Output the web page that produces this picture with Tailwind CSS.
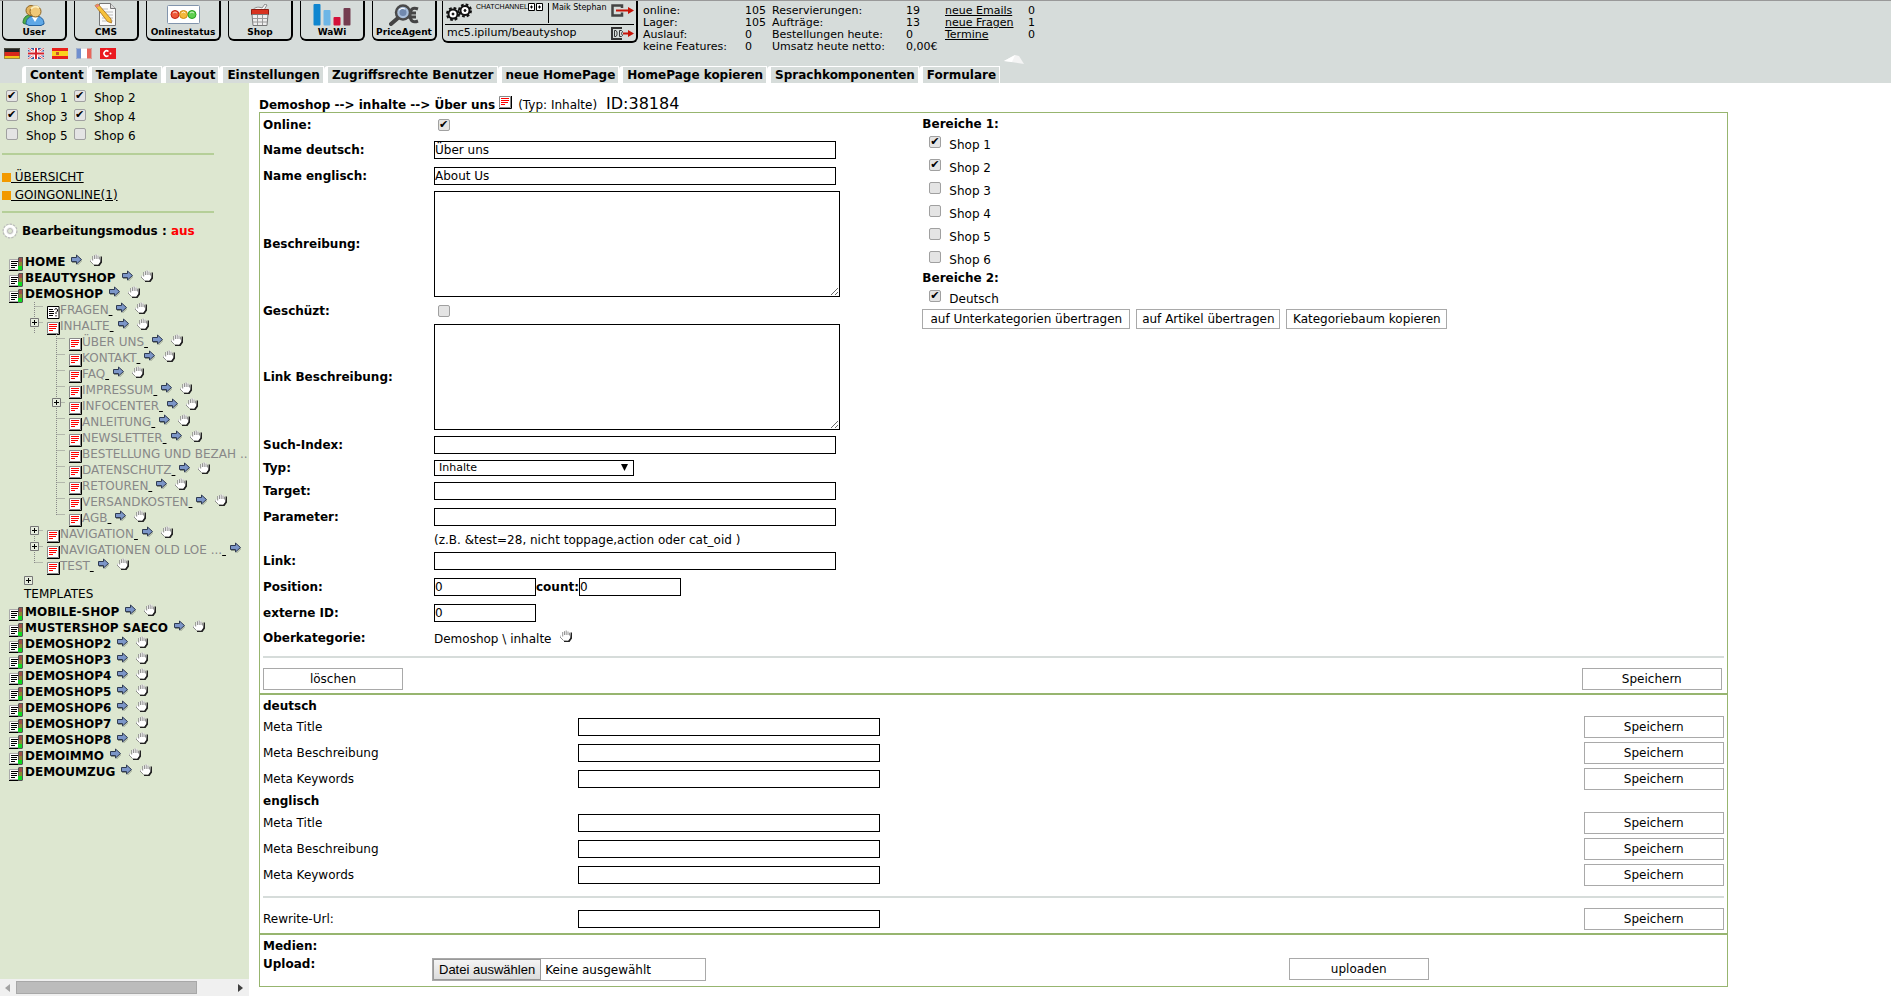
<!DOCTYPE html>
<html lang="de">
<head>
    <meta charset="UTF-8">
    <meta name="viewport" content="width=device-width, initial-scale=1.0">
    <title>CMS - Über uns</title>
    <script src="https://cdn.jsdelivr.net/npm/@tailwindcss/browser@4"></script>
</head>
<body class="flex min-h-screen flex-col bg-white font-['DejaVu_Sans',Verdana,sans-serif] text-xs text-black">
    <!-- icons -->
    <svg class="hidden">
        <symbol id="i-arrow" viewBox="0 0 11 11">
            <path d="M1 8h5v3l5-5v1l-4 4H6V9H1z" fill="#8d9686"/>
            <path d="M.5 3.500h5V1l5 4.500-5 4.500V7.500h-5z" fill="#7c96c8" stroke="#2f3a52"/>
        </symbol>
        <symbol id="i-hand" viewBox="0 0 12 12">
            <path d="M3 10h1v2h5.500l2.500-3.500V2.500l-1.500 0-.5 5-2 3z" fill="#222"/>
            <path d="M3.500 10.500 0 7V5.500l1.500 0 1.200 1V2h1.600V1h1.500V.3h1.500V1.300h1.500v1.400h1.500v5l-2 2.800z" fill="#fff"/>
            <path d="M2.700 6.500V2M4.500 5V1.200M6.200 5V.5M8 5V1.500M9.500 5.500V2.700M3.500 10.500 0 7V5.500" fill="none" stroke="#666" stroke-width=".7"/>
        </symbol>
        <symbol id="i-page" viewBox="0 0 13 13">
            <path d="M.5.5h11v11H.5z" fill="#fff" stroke="#888"/>
            <path d="M12.500 0v12.500H0" fill="none" stroke="#000"/>
            <path d="M2 2.500h8M2 4.500h8M2 6.500h7M2 8.500h4" stroke="#f00"/>
        </symbol>
        <symbol id="i-question" viewBox="0 0 13 13">
            <path d="M.5.5h11.500v12H.5z" fill="#fff" stroke="#000"/>
            <path d="M2 3.500h4M2 5.500h5M2 7.500h5M2 9.500h4M7.500 3.500 9 2.500l1.500 1v1.500L9 6.500V8M9 9v1.500" fill="none" stroke="#000"/>
        </symbol>
        <symbol id="i-shop" viewBox="0 0 14 14">
            <path d="M.5 2.500h9v10h-9z" fill="#fff" stroke="#aaa"/>
            <path d="M0 13.500h10M2 4.500h7M2 6.500h6M2 8.500h6M2 10.500h4" stroke="#000"/>
            <path d="M9 1l1-1h4v13l-1 1H9z" fill="#555"/>
            <path d="M10 1h3v4h-3z" fill="#a05048"/><path d="M10 5h3v4h-3z" fill="#8a8a30"/><path d="M9 9h4v4H9z" fill="#10d820"/>
        </symbol>
        <symbol id="i-plus" viewBox="0 0 9 9">
            <path d="M.5.5h8v8h-8z" fill="#e6edde" stroke="#777"/><path d="M2 4.500h5M4.500 2v5" stroke="#000"/>
        </symbol>
    </svg>

    <header class="flex h-[83px] shrink-0 flex-col justify-between border-t border-[#999] bg-[#d6dcda]">
        <div class="flex items-start">
            <div>
                <nav class="flex gap-[7px] pl-[2px] text-[9px] font-bold leading-[10px]">
                    <a href="#" class="flex h-[40px] w-[65px] flex-col items-center gap-px rounded-b-md border-r-2 border-b-2 border-l border-black pt-[3px]">
                        <svg class="h-[22px] w-[24px]" viewBox="0 0 24 22">
                            <path d="M1 19c0-5 3-8 7-8l3 3v6H3z" fill="#4fae4b" stroke="#2c7d36"/>
                            <circle cx="9" cy="6.500" r="5" fill="#e3b35c" stroke="#8e6523"/>
                            <path d="M4 20c0-5 3-8 9-8s9 3 9 8l-3 1.500H7z" fill="#5fa8e6" stroke="#1f5f9e"/>
                            <path d="M10 13l3 5 3-5z" fill="#fff"/>
                            <circle cx="13.500" cy="7.500" r="5.500" fill="#f0c878" stroke="#8e6523"/>
                            <path d="M9 5c2-3 6-3 8-1" stroke="#fdeebb" stroke-width="2" fill="none"/>
                        </svg>
                        User
                    </a>
                    <a href="#" class="flex h-[40px] w-[65px] flex-col items-center gap-px rounded-b-md border-r-2 border-b-2 border-l border-black pt-[2px]">
                        <svg class="h-[23px] w-[24px]" viewBox="0 0 24 23">
                            <path d="M5.500.5h11l5 5v17h-16z" fill="#fafafa" stroke="#777"/>
                            <path d="M16.500.5v5h5" fill="#ddd" stroke="#777"/>
                            <path d="M8 6h6M8 9h11M8 12h11M8 15h11M8 18h11" stroke="#bbb"/>
                            <path d="M1 2.500 4 1l13 15 .5 4-4-1.500z" fill="#f7c23c" stroke="#a86f16" stroke-width=".8"/>
                            <path d="M1 2.500 4 1l1.500 1.800-2.800 2z" fill="#e8847a"/>
                        </svg>
                        CMS
                    </a>
                    <a href="#" class="flex h-[40px] w-[75px] flex-col items-center gap-[3px] rounded-b-md border-r-2 border-b-2 border-l border-black pt-[4px]">
                        <svg class="h-[19px] w-[33px]" viewBox="0 0 33 19">
                            <rect x=".5" y=".5" width="32" height="18" rx="1" fill="#fff" stroke="#8295ad"/>
                            <circle cx="8" cy="9.500" r="4" fill="#ee5a3a" stroke="#c02010"/><circle cx="16.500" cy="9.500" r="4" fill="#f4b93c" stroke="#d08a10"/><circle cx="25" cy="9.500" r="4" fill="#5fd050" stroke="#27a020"/>
                            <path d="M6 8q2-2 4 0M14.500 8q2-2 4 0M23 8q2-2 4 0" stroke="#fff" fill="none" stroke-opacity=".7"/>
                        </svg>
                        Onlinestatus
                    </a>
                    <a href="#" class="flex h-[40px] w-[65px] flex-col items-center gap-px rounded-b-md border-r-2 border-b-2 border-l border-black pt-[3px]">
                        <svg class="h-[22px] w-[18px]" viewBox="0 0 18 22">
                            <path d="M1 7c3-5 8-4 10-3l3-4 2 1-3 5 3 2v3H1z" fill="#f5f5f5" stroke="#777" stroke-width=".8"/>
                            <path d="M.5 5.500h17v5H.5z" fill="#d8321f" stroke="#8d1d12"/>
                            <path d="M1 10.500h16l-1 11H2z" fill="#eee" stroke="#777"/>
                            <path d="M6.500 11v10M11.500 11v10M2 14.500h14M2 18h14" stroke="#999"/>
                        </svg>
                        Shop
                    </a>
                    <a href="#" class="flex h-[40px] w-[65px] flex-col items-center gap-px rounded-b-md border-r-2 border-b-2 border-l border-black pt-[2px]">
                        <svg class="h-[23px] w-[38px]" viewBox="0 0 38 23">
                            <rect x=".5" y="1" width="7" height="21.500" rx="1" fill="#0f86d0"/><rect x="10.500" y="7" width="7" height="15.500" rx="1" fill="#6db6e6"/><rect x="20.500" y="14" width="7" height="8.500" rx="1" fill="#d4103a"/><rect x="30.500" y="5" width="7" height="17.500" rx="1" fill="#743c50"/>
                        </svg>
                        WaWi
                    </a>
                    <a href="#" class="flex h-[40px] w-[65px] flex-col items-center gap-px rounded-b-md border-r-2 border-b-2 border-l border-black pt-[3px]">
                        <svg class="h-[22px] w-[30px]" viewBox="0 0 30 22">
                            <path d="M29 5c-5-2-8 0-8 6s3 8 8 6M18 9h9M18 13h9" stroke="#444" stroke-width="3" fill="none"/>
                            <path d="M2 20l7-6" stroke="#444" stroke-width="4" stroke-linecap="round"/>
                            <circle cx="14" cy="8.500" r="7" fill="#a9bfdb" stroke="#4a4a4a" stroke-width="2.500"/>
                            <circle cx="14" cy="8.500" r="3.500" fill="#7189ae"/><path d="M10 6q3-3 6-1" stroke="#fff" fill="none"/>
                        </svg>
                        PriceAgent
                    </a>
                </nav>
                <div class="flex gap-2 pt-[7px] pl-1">
                    <a href="#" aria-label="Deutsch"><svg class="h-[11px] w-4" viewBox="0 0 16 11"><path fill="#222" d="M0 0h16v4H0z"/><path fill="#d9281c" d="M0 4h16v4H0z"/><path fill="#f1c21b" d="M0 8h16v3H0z"/><path d="M.5.5h15v10H.5z" fill="none" stroke="#665" stroke-opacity=".6"/></svg></a>
                    <a href="#" aria-label="English"><svg class="h-[11px] w-4" viewBox="0 0 16 11"><path fill="#3d5a9e" d="M0 0h16v11H0z"/><path d="M0 0l16 11M16 0L0 11" stroke="#fff" stroke-width="2.500"/><path d="M0 0l16 11M16 0L0 11" stroke="#d33" stroke-width=".8"/><path d="M8 0v11M0 5.500h16" stroke="#fff" stroke-width="4"/><path d="M8 0v11M0 5.500h16" stroke="#d3222c" stroke-width="2"/></svg></a>
                    <a href="#" aria-label="Español"><svg class="h-[11px] w-4" viewBox="0 0 16 11"><path fill="#e8201c" d="M0 0h16v11H0z"/><path fill="#fbd21c" d="M0 3h16v5H0z"/><path fill="#c5502c" d="M4 4h3v3H4z"/></svg></a>
                    <a href="#" aria-label="Français"><svg class="h-[11px] w-4" viewBox="0 0 16 11"><path fill="#fff" d="M0 0h16v11H0z"/><path fill="#6f8fcf" d="M0 0h5v11H0z"/><path fill="#e8655a" d="M11 0h5v11h-5z"/><path d="M.5.5h15v10H.5z" fill="none" stroke="#ccc" stroke-opacity=".6"/></svg></a>
                    <a href="#" aria-label="Türkçe"><svg class="h-[11px] w-4" viewBox="0 0 16 11"><path fill="#ea1a20" d="M0 0h16v11H0z"/><path d="M8.500 3.500a2.700 2.700 0 1 0 0 4" stroke="#fff" stroke-width="1.500" fill="none"/><circle cx="10.500" cy="5.500" r="1" fill="#fff"/></svg></a>
                </div>
            </div>

            <div class="ml-[5px] w-[196px] rounded-b-md border-r-2 border-b-2 border-l border-black px-[2px]">
                <div class="flex h-[24px] items-start gap-[3px] border-b border-black pt-[2px]">
                    <svg class="h-[18px] w-[28px] shrink-0" viewBox="0 0 28 18">
                        <g fill="none" stroke="#111">
                            <circle cx="8" cy="11" r="6" stroke-width="2" stroke-dasharray="2.700 2"/><circle cx="8" cy="11" r="4.500" stroke-width="2" fill="#fff"/><circle cx="8" cy="11" r="1" fill="#111"/>
                            <circle cx="20" cy="7.500" r="6" stroke-width="2" stroke-dasharray="2.700 2"/><circle cx="20" cy="7.500" r="4.500" stroke-width="2" fill="#fff"/><circle cx="20" cy="7.500" r="1" fill="#111"/>
                        </g>
                    </svg>
                    <div class="flex h-[20px] w-[73px] shrink-0 items-start border-r border-black font-['Liberation_Sans',sans-serif] text-[7px] leading-[8px]">
                        <span>CHATCHANNEL</span>
                        <svg class="h-2 w-[15px] shrink-0" viewBox="0 0 15 8"><path d="M.5.5h6v7h-6zM8.500.5h6v7h-6z" fill="#fff" stroke="#000"/><path d="M2 4h3M3.500 2.500v3M10 4h3M11.500 2.500v3" stroke="#000"/></svg>
                    </div>
                    <span class="w-[58px] text-[8px] leading-[10px] whitespace-nowrap">Maik Stephan</span>
                    <a href="#" aria-label="Logout"><svg class="h-[15px] w-[23px]" viewBox="0 0 23 15"><path d="M11 5V2.500H1.500v10H11v-3" fill="none" stroke="#444" stroke-width="2.500"/><path d="M5 6.500h12V4l6 3.500-6 3.500V8.500H5z" fill="#c81408"/></svg></a>
                </div>
                <div class="flex h-[16px] items-center justify-between pl-[2px] text-[11px]">
                    <span>mc5.ipilum/beautyshop</span>
                    <a href="#" aria-label="Datenbank"><svg class="h-[13px] w-[23px]" viewBox="0 0 23 13"><path d="M11 1H1v11h10" fill="none" stroke="#333" stroke-width="2"/><path d="M3.500 3.500v6h1.500l1-1.500V5L5 3.500zM8.500 3.500v6h2l1-1-1-2 1-2-1-1z" fill="none" stroke="#333"/><path d="M12 5.500h5V3l6 3.500-6 3.500V7.500h-5z" fill="#c81408"/></svg></a>
                </div>
            </div>

            <table class="mt-1 ml-[5px] text-[11px] leading-[12px] whitespace-nowrap">
                <tbody>
                    <tr><td class="w-[102px] p-0">online:</td><td class="w-[27px] p-0">105</td><td class="w-[134px] p-0">Reservierungen:</td><td class="w-[39px] p-0">19</td><td class="w-[83px] p-0"><a href="#" class="underline">neue Emails</a></td><td class="p-0">0</td></tr>
                    <tr><td class="p-0">Lager:</td><td class="p-0">105</td><td class="p-0">Aufträge:</td><td class="p-0">13</td><td class="p-0"><a href="#" class="underline">neue Fragen</a></td><td class="p-0">1</td></tr>
                    <tr><td class="p-0">Auslauf:</td><td class="p-0">0</td><td class="p-0">Bestellungen heute:</td><td class="p-0">0</td><td class="p-0"><a href="#" class="underline">Termine</a></td><td class="p-0">0</td></tr>
                    <tr><td class="p-0">keine Features:</td><td class="p-0">0</td><td class="p-0">Umsatz heute netto:</td><td class="p-0">0,00€</td><td class="p-0"></td><td class="p-0"></td></tr>
                </tbody>
            </table>
            <svg class="mt-[54px] -ml-[32px] h-[10px] w-[22px]" viewBox="0 0 22 10"><path d="M1 6 12 0l4 1 5 8z" fill="#f4f4f4"/><path d="M1 6 12 0 9 7z" fill="#fff"/></svg>
        </div>
        <nav class="flex pl-[22px] text-xs font-bold leading-4 whitespace-nowrap">
            <a href="#" class="rounded-tl-sm border-t border-r border-l-4 border-white pr-[3px] pl-1">Content</a>
            <a href="#" class="rounded-tl-sm border-t border-r border-l-4 border-white pr-[3px] pl-1">Template</a>
            <a href="#" class="rounded-tl-sm border-t border-r border-l-4 border-white pr-[3px] pl-1">Layout</a>
            <a href="#" class="rounded-tl-sm border-t border-r border-l-4 border-white pr-[3px] pl-1">Einstellungen</a>
            <a href="#" class="rounded-tl-sm border-t border-r border-l-4 border-white pr-[3px] pl-1">Zugriffsrechte Benutzer</a>
            <a href="#" class="rounded-tl-sm border-t border-r border-l-4 border-white pr-[3px] pl-1">neue HomePage</a>
            <a href="#" class="rounded-tl-sm border-t border-r border-l-4 border-white pr-[3px] pl-1">HomePage kopieren</a>
            <a href="#" class="rounded-tl-sm border-t border-r border-l-4 border-white pr-[3px] pl-1">Sprachkomponenten</a>
            <a href="#" class="rounded-tl-sm border-t border-r border-l-4 border-white pr-[3px] pl-1">Formulare</a>
        </nav>
    </header>

    <div class="flex grow">
        <aside class="flex w-[249px] shrink-0 flex-col overflow-hidden bg-[#dde7d0]">
            <div id="shopFilter" class="grid grid-cols-[68px_auto] justify-start pt-1 pl-[6px]"></div>
            <hr class="mt-[9px] mr-[35px] ml-[2px] border-t-2 border-[#b5cf98]">
            <ul class="mt-[13px] pl-[2px] leading-[18px]">
                <li class="flex items-center"><span class="size-[9px] bg-[#f29a00]"></span><a href="#" class="whitespace-pre underline"> ÜBERSICHT</a></li>
                <li class="flex items-center"><span class="size-[9px] bg-[#f29a00]"></span><a href="#" class="whitespace-pre underline"> GOINGONLINE(1)</a></li>
            </ul>
            <hr class="mt-[7px] mr-[35px] ml-[2px] border-t-2 border-[#b5cf98]">
            <div class="mt-[10px] flex h-4 items-center gap-1 pl-[2px] font-bold">
                <svg class="size-4" viewBox="0 0 16 16"><circle cx="8" cy="8" r="6.800" fill="none" stroke="#bbb" stroke-width="1.500" stroke-dasharray="2.200 1.300"/><circle cx="8" cy="8" r="5" fill="#eee" stroke="#fff" stroke-width="2.500"/><circle cx="8" cy="8" r="2.500" fill="#dde7d0" stroke="#bbb"/></svg>
                <span>Bearbeitungsmodus : <span class="text-[#f00]">aus</span></span>
            </div>
            <ul id="tree" class="mt-[15px] leading-4 whitespace-nowrap"></ul>
            <div class="mt-auto flex h-[17px] items-center bg-[#f0f0f0]">
                <svg class="mx-1 h-2 w-2" viewBox="0 0 8 8"><path d="M6 0v8L1 4z" fill="#a3a3a3"/></svg>
                <div class="h-[13px] w-[181px] border border-[#a8a8a8] bg-[#bcbcbc]"></div>
                <svg class="mr-[5px] ml-auto h-2 w-2" viewBox="0 0 8 8"><path d="M2 0v8l5-4z" fill="#404040"/></svg>
            </div>
        </aside>

        <main class="grow pl-[10px]">
            <div class="w-9/10">
                <h1 class="flex h-[29px] items-end whitespace-pre font-bold leading-[14px]">Demoshop --&gt; inhalte --&gt; Über uns <svg class="mr-[2px] mb-[3px] size-[13px]"><use href="#i-page"/></svg><span class="font-normal"> (Typ: Inhalte) </span><span class="pb-px text-base font-normal leading-[14px]"> ID:38184</span></h1>
                <form class="border border-[#97b56f]">
                    <section class="flex px-[3px]">
                        <div class="grid w-[45%] shrink-0 grid-cols-[171px_1fr] items-center">
                            <label for="online" class="font-bold">Online:</label>
                            <div class="flex h-6 items-center pl-1"><input id="online" type="checkbox" checked class="size-3 appearance-none rounded-[2px] border border-[#a0a0a0] bg-[#e4e4e4] text-[11px] leading-[9px] checked:before:content-['✔']"></div>

                            <label for="nameDe" class="font-bold">Name deutsch:</label>
                            <div class="flex h-[26px] items-center"><input id="nameDe" type="text" value="Über uns" class="h-[18px] w-[402px] border border-black leading-[18px]"></div>

                            <label for="nameEn" class="font-bold">Name englisch:</label>
                            <div class="flex h-[26px] items-center"><input id="nameEn" type="text" value="About Us" class="h-[18px] w-[402px] border border-black leading-[18px]"></div>

                            <label for="desc" class="font-bold">Beschreibung:</label>
                            <div class="flex h-[110px] items-center"><textarea id="desc" class="h-[106px] w-[406px] border border-black"></textarea></div>

                            <label for="locked" class="font-bold">Geschüzt:</label>
                            <div class="flex h-[23px] items-center pl-1"><input id="locked" type="checkbox" class="size-3 appearance-none rounded-[2px] border border-[#a0a0a0] bg-[#e4e4e4] text-[11px] leading-[9px] checked:before:content-['✔']"></div>

                            <label for="linkDesc" class="font-bold">Link Beschreibung:</label>
                            <div class="flex h-[110px] items-center"><textarea id="linkDesc" class="h-[106px] w-[406px] border border-black"></textarea></div>

                            <label for="searchIndex" class="font-bold">Such-Index:</label>
                            <div class="flex h-[26px] items-center"><input id="searchIndex" type="text" class="h-[18px] w-[402px] border border-black leading-[18px]"></div>

                            <label for="type" class="font-bold">Typ:</label>
                            <div class="flex h-5 items-center">
                                <div class="relative">
                                    <select id="type" class="block h-4 w-[200px] appearance-none border border-black bg-white pl-1 text-[11px] leading-[14px]"><option>Inhalte</option></select>
                                    <svg class="pointer-events-none absolute top-1 right-[6px] h-[7px] w-[7px]" viewBox="0 0 7 7"><path d="M0 0h7L3.500 7z"/></svg>
                                </div>
                            </div>

                            <label for="target" class="font-bold">Target:</label>
                            <div class="flex h-[26px] items-center"><input id="target" type="text" class="h-[18px] w-[402px] border border-black leading-[18px]"></div>

                            <label for="param" class="font-bold">Parameter:</label>
                            <div class="flex h-[26px] items-center"><input id="param" type="text" class="h-[18px] w-[402px] border border-black leading-[18px]"></div>

                            <div class="col-start-2 h-[18px] leading-5">(z.B. &amp;test=28, nicht toppage,action oder cat_oid )</div>

                            <label for="link" class="font-bold">Link:</label>
                            <div class="flex h-[26px] items-center"><input id="link" type="text" class="h-[18px] w-[402px] border border-black leading-[18px]"></div>

                            <label for="position" class="font-bold">Position:</label>
                            <div class="flex h-[26px] items-center"><input id="position" type="text" value="0" class="h-[18px] w-[102px] border border-black leading-[18px]"><label for="count" class="font-bold">count:</label><input id="count" type="text" value="0" class="h-[18px] w-[102px] border border-black leading-[18px]"></div>

                            <label for="extId" class="font-bold">externe ID:</label>
                            <div class="flex h-[26px] items-center"><input id="extId" type="text" value="0" class="h-[18px] w-[102px] border border-black leading-[18px]"></div>

                            <span class="font-bold">Oberkategorie:</span>
                            <div class="flex h-6 items-start gap-[9px]"><span class="leading-[26px]">Demoshop \ inhalte</span><a href="#" class="pt-1" aria-label="Verschieben"><svg class="size-3"><use href="#i-hand"/></svg></a></div>
                        </div>

                        <div class="pt-[2px] pl-[2px]">
                            <h2 class="h-[18px] font-bold leading-[18px]">Bereiche 1:</h2>
                            <div id="areas"></div>
                            <h2 class="h-[16px] font-bold leading-[14px]">Bereiche 2:</h2>
                            <div class="flex h-[22px] items-start gap-2 pl-[7px]"><input id="langDe" type="checkbox" checked class="mt-[3px] size-3 appearance-none rounded-[2px] border border-[#a0a0a0] bg-[#e4e4e4] text-[11px] leading-[9px] checked:before:content-['✔']"><label for="langDe" class="leading-6">Deutsch</label></div>
                            <div class="flex gap-[6px]">
                                <button type="button" class="h-5 w-[208px] border border-[#a9a9a9]">auf Unterkategorien übertragen</button>
                                <button type="button" class="h-5 w-[144px] border border-[#a9a9a9]">auf Artikel übertragen</button>
                                <button type="button" class="h-5 w-[161px] border border-[#a9a9a9]">Kategoriebaum kopieren</button>
                            </div>
                        </div>
                    </section>
                    <hr class="mx-[3px] mt-[6px] border-t-2 border-[#d6dcda]">
                    <div class="flex justify-between pt-[10px] pr-[5px] pb-[3px] pl-[3px]">
                        <button type="button" class="h-[22px] w-[140px] border border-[#a9a9a9]">löschen</button>
                        <button type="submit" class="h-[22px] w-[140px] border border-[#a9a9a9]">Speichern</button>
                    </div>

                    <section class="border-t-2 border-[#97b56f] px-[3px] pt-[2px]">
                        <h2 class="h-[17px] font-bold leading-[18px]">deutsch</h2>
                        <div id="metaDe"></div>
                        <h2 class="h-[18px] font-bold leading-[18px]">englisch</h2>
                        <div id="metaEn"></div>
                        <hr class="mt-2 border-t-2 border-[#d6dcda]">
                        <div class="grid h-[35px] grid-cols-[315px_1fr_140px] items-center pt-2 pb-px">
                            <label for="rewrite">Rewrite-Url:</label>
                            <input id="rewrite" type="text" class="h-[18px] w-[302px] border border-black leading-[18px]">
                            <button type="button" class="h-[22px] border border-[#a9a9a9]">Speichern</button>
                        </div>
                    </section>

                    <section class="border-t-2 border-[#97b56f] px-[3px] pt-[2px] pb-[5px]">
                        <h2 class="h-[18px] font-bold leading-[18px]">Medien:</h2>
                        <div class="flex items-start">
                            <span class="w-[169px] font-bold leading-[18px]">Upload:</span>
                            <label class="mt-[3px] flex h-[23px] w-[274px] items-center border border-[#a9a9a9]">
                                <input type="file" class="sr-only">
                                <span class="mr-1 flex h-[21px] items-center border border-[#999] bg-linear-to-b from-[#f4f4f4] to-[#dcdcdc] px-[5px] font-['Liberation_Sans',sans-serif] text-[13px] whitespace-nowrap">Datei auswählen</span>
                                Keine ausgewählt
                            </label>
                            <button type="button" class="mt-[3px] mr-[295px] ml-auto h-[22px] w-[140px] border border-[#a9a9a9]">uploaden</button>
                        </div>
                    </section>
                </form>
            </div>
        </main>
    </div>

    <script>
        const boxClass = "mt-[3px] size-3 appearance-none rounded-[2px] border border-[#a0a0a0] bg-[#e4e4e4] text-[11px] leading-[9px] checked:before:content-['✔']";

        // shop checkboxes, left column and form
        document.getElementById('shopFilter').innerHTML = [1, 2, 3, 4, 5, 6].map(n => `
            <div class="flex h-[19px] items-start gap-2">
                <input id="filter${n}" type="checkbox" class="${boxClass}" ${n < 5 ? 'checked' : ''}>
                <label for="filter${n}" class="leading-[22px]">Shop ${n}</label>
            </div>`).join('');

        document.getElementById('areas').innerHTML = [1, 2, 3, 4, 5, 6].map(n => `
            <div class="flex h-[23px] items-start gap-2 pl-[7px]">
                <input id="area${n}" type="checkbox" class="${boxClass}" ${n < 3 ? 'checked' : ''}>
                <label for="area${n}" class="leading-6">Shop ${n}</label>
            </div>`).join('');

        // meta fields per language
        ['metaDe', 'metaEn'].forEach(id => {
            document.getElementById(id).innerHTML = ['Meta Title', 'Meta Beschreibung', 'Meta Keywords'].map((name, i) => `
                <div class="grid h-[26px] grid-cols-[315px_1fr_140px] items-center">
                    <label for="${id}${i}">${name}</label>
                    <input id="${id}${i}" type="text" class="h-[18px] w-[302px] border border-black leading-[18px]">
                    <button type="button" class="h-[22px] border border-[#a9a9a9]">Speichern</button>
                </div>`).join('');
        });

        // [level, name, icon, expandable, last of its branch]
        const tree = [
            [1, 'HOME'], [1, 'BEAUTYSHOP'], [1, 'DEMOSHOP'],
            [2, 'FRAGEN', 'question'], [2, 'INHALTE', 'page', true],
            [3, 'ÜBER UNS', 'page'], [3, 'KONTAKT', 'page'], [3, 'FAQ', 'page'], [3, 'IMPRESSUM', 'page'],
            [3, 'INFOCENTER', 'page', true], [3, 'ANLEITUNG', 'page'], [3, 'NEWSLETTER', 'page'],
            [3, 'BESTELLUNG UND BEZAH ..', 'page'], [3, 'DATENSCHUTZ', 'page'], [3, 'RETOUREN', 'page'],
            [3, 'VERSANDKOSTEN', 'page'], [3, 'AGB', 'page', false, true],
            [2, 'NAVIGATION', 'page', true], [2, 'NAVIGATIONEN OLD LOE ...', 'page', true], [2, 'TEST', 'page', false, true],
            [0, 'TEMPLATES'],
            [1, 'MOBILE-SHOP'], [1, 'MUSTERSHOP SAECO'], [1, 'DEMOSHOP2'], [1, 'DEMOSHOP3'], [1, 'DEMOSHOP4'],
            [1, 'DEMOSHOP5'], [1, 'DEMOSHOP6'], [1, 'DEMOSHOP7'], [1, 'DEMOSHOP8'], [1, 'DEMOIMMO'], [1, 'DEMOUMZUG']
        ];
        const openLink = '<a href="#" aria-label="Öffnen"><svg class="size-[11px]"><use href="#i-arrow"/></svg></a>';
        const moveLink = '<a href="#" aria-label="Verschieben"><svg class="size-3"><use href="#i-hand"/></svg></a>';

        const links = name => name.length > 23 ? openLink : name.length > 20 ? '' : openLink + moveLink;

        document.getElementById('tree').innerHTML = tree.map(([level, name, icon, plus, last]) => {
            if (level === 0) {
                return `<li class="pt-[2px] pb-[2px]"><svg class="ml-6 size-[9px]"><use href="#i-plus"/></svg><a href="#" class="block pl-6 pt-px">${name}</a></li>`;
            }
            if (level === 1) {
                return `<li class="flex h-4 items-start pl-[9px]"><svg class="mt-[3px] mr-[2px] size-[14px]"><use href="#i-shop"/></svg><a href="#" class="font-bold">${name}</a><span class="flex gap-2 pl-[6px]">${links(name)}</span></li>`;
            }
            return `<li class="flex h-4 items-start ${level === 2 ? 'pl-[30px]' : 'pl-[52px]'}">
                <svg class="mr-1 h-4 w-[13px] shrink-0" viewBox="0 0 13 16">
                    <path d="M4.500 0v${last ? 5 : 16}M4.500 4.500h9" stroke="#888" stroke-dasharray="1 1" fill="none"/>
                    ${plus ? '<use href="#i-plus" width="9" height="9"/>' : ''}
                </svg>
                <svg class="mt-1 size-[13px] shrink-0"><use href="#i-${icon}"/></svg>
                <a href="#" class="whitespace-pre text-[#888]">${name}${name.length === 23 ? '' : '<span class="text-black underline"> </span>'}</a><span class="flex gap-2 pl-1">${links(name)}</span></li>`;
        }).join('');
    </script>
</body>
</html>
